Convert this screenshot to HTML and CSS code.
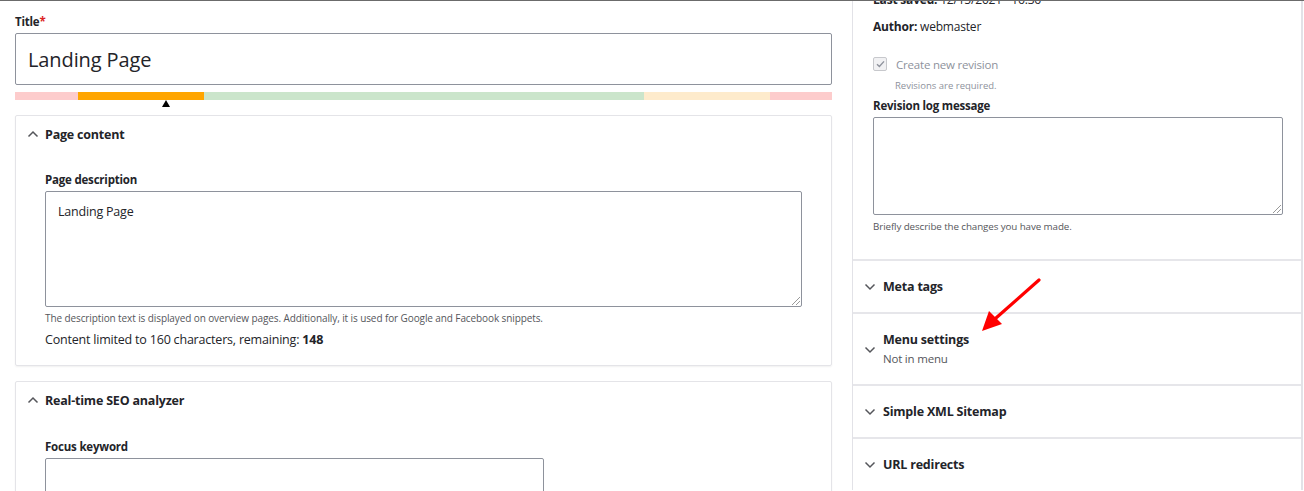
FILE: index.html
```html
<!DOCTYPE html>
<html lang="en">
<head>
<meta charset="utf-8">
<title>Edit Landing Page</title>
<link rel="stylesheet" href="styles.css">
</head>
<body>
<div class="viewport">
  <div class="layout">
    <main class="main">
      <label class="label title-label">Title<span class="req">*</span></label>
      <div class="title-input">Landing Page</div>
      <div class="score-bar">
        <span class="seg seg-pink" style="width:63px"></span>
        <span class="seg seg-orange" style="width:126px"></span>
        <span class="seg seg-green" style="width:440px"></span>
        <span class="seg seg-yellow" style="width:126px"></span>
        <span class="seg seg-pink" style="width:62px"></span>
        <span class="marker" style="left:147px"></span>
      </div>

      <section class="card">
        <div class="card-head">
          <svg class="chev" width="12" height="8" viewBox="0 0 12 8"><path d="M1.5 6.5 L6 2 L10.5 6.5" fill="none" stroke="#55565b" stroke-width="1.5"/></svg>
          <span>Page content</span>
        </div>
        <div class="card-body">
          <label class="label">Page description</label>
          <div class="textarea desc-area">Landing Page<span class="grip"></span></div>
          <div class="help">The description text is displayed on overview pages. Additionally, it is used for Google and Facebook snippets.</div>
          <div class="counter">Content limited to 160 characters, remaining: <b>148</b></div>
        </div>
      </section>

      <section class="card">
        <div class="card-head">
          <svg class="chev" width="12" height="8" viewBox="0 0 12 8"><path d="M1.5 6.5 L6 2 L10.5 6.5" fill="none" stroke="#55565b" stroke-width="1.5"/></svg>
          <span>Real-time SEO analyzer</span>
        </div>
        <div class="card-body seo-body">
          <label class="label">Focus keyword</label>
          <div class="keyword-input"></div>
        </div>
      </section>
    </main>

    <aside class="sidebar">
      <div class="meta">
        <div class="meta-line"><b>Last saved:</b> 12/15/2021 - 16:36</div>
        <div class="meta-line author"><b>Author:</b> webmaster</div>
        <div class="check-row">
          <span class="checkbox"><svg width="9" height="8" viewBox="0 0 9 8"><path d="M1 4.2 L3.4 6.4 L8 1.4" fill="none" stroke="#8e929c" stroke-width="1.4"/></svg></span>
          <span class="check-label">Create new revision</span>
        </div>
        <div class="check-help">Revisions are required.</div>
        <label class="label log-label">Revision log message</label>
        <div class="textarea log-area"><span class="grip"></span></div>
        <div class="help log-help">Briefly describe the changes you have made.</div>
      </div>
      <div class="acc">
        <svg class="chev" width="12" height="8" viewBox="0 0 12 8"><path d="M1.5 1.5 L6 6 L10.5 1.5" fill="none" stroke="#55565b" stroke-width="1.5"/></svg>
        <span class="acc-title">Meta tags</span>
      </div>
      <div class="acc acc-tall">
        <svg class="chev" width="12" height="8" viewBox="0 0 12 8"><path d="M1.5 1.5 L6 6 L10.5 1.5" fill="none" stroke="#55565b" stroke-width="1.5"/></svg>
        <div>
          <div class="acc-title">Menu settings</div>
          <div class="acc-sub">Not in menu</div>
        </div>
      </div>
      <div class="acc">
        <svg class="chev" width="12" height="8" viewBox="0 0 12 8"><path d="M1.5 1.5 L6 6 L10.5 1.5" fill="none" stroke="#55565b" stroke-width="1.5"/></svg>
        <span class="acc-title">Simple XML Sitemap</span>
      </div>
      <div class="acc">
        <svg class="chev" width="12" height="8" viewBox="0 0 12 8"><path d="M1.5 1.5 L6 6 L10.5 1.5" fill="none" stroke="#55565b" stroke-width="1.5"/></svg>
        <span class="acc-title">URL redirects</span>
      </div>
    </aside>
  </div>
  <svg class="annot" width="70" height="62" viewBox="0 0 70 62">
    <line x1="67" y1="8" x2="24" y2="46" stroke="#ff0000" stroke-width="3.2" stroke-linecap="round"/>
    <path d="M10 59 L17 39 L30 52 Z" fill="#ff0000"/>
  </svg>
</div>
</body>
</html>
```

FILE: styles.css
```css
* { box-sizing: border-box; }
html, body { margin: 0; padding: 0; background: #fff; }
body {
  font-family: "Open Sans", "Noto Sans", sans-serif;
  color: #232429;
  font-size: 12px;
}
.viewport {
  position: relative;
  width: 1304px;
  height: 491px;
  overflow: hidden;
  border-top: 1px solid #6b6b6b;
}
.layout {
  display: flex;
  gap: 20px;
  padding-left: 15px;
  align-items: flex-start;
}
.main {
  width: 817px;
  padding-top: 13px;
}
.label {
  display: block;
  font-weight: 700;
  font-size: 11.5px;
  line-height: 16px;
  letter-spacing: -0.2px;
  color: #232429;
}
.req { color: #dc2323; }
.title-input {
  margin-top: 3px;
  height: 52px;
  border: 1px solid #8e929c;
  border-radius: 2px;
  padding-left: 12px;
  font-size: 20px;
  line-height: 51px;
  letter-spacing: -0.1px;
  color: #232429;
}
.score-bar {
  position: relative;
  display: flex;
  margin-top: 7px;
  height: 8px;
}
.seg { display: block; height: 8px; }
.seg-pink { background: #fdcccc; }
.seg-orange { background: #ffa500; }
.seg-green { background: #cbe5cb; }
.seg-yellow { background: #feebcc; }
.marker {
  position: absolute;
  top: 8px;
  width: 0; height: 0;
  border-left: 4px solid transparent;
  border-right: 4px solid transparent;
  border-bottom: 7px solid #000;
}
.card {
  margin-top: 15px;
  border: 1px solid #e4e4e8;
  border-radius: 2px;
  box-shadow: 0 1px 2px rgba(0,0,0,0.06);
}
.card-head {
  display: flex;
  align-items: center;
  gap: 6px;
  padding: 0 0 0 11px;
  height: 37px;
  font-weight: 700;
  font-size: 12.5px;
  letter-spacing: -0.2px;
}
.card-head .chev { margin-top: -2px; }
.card-body {
  padding: 19px 29px 16px 29px;
}
.seo-body { padding-top: 20px; }
.textarea {
  position: relative;
  border: 1px solid #8e929c;
  border-radius: 2px;
  background: #fff;
}
.desc-area {
  margin-top: 3px;
  height: 116px;
  padding: 11px 12px;
  font-size: 12.5px;
  line-height: 18px;
  letter-spacing: -0.2px;
}
.grip {
  position: absolute;
  right: 1px; bottom: 1px;
  width: 8px; height: 8px;
  background: linear-gradient(135deg, transparent 45%, #999 45%, #999 52%, transparent 52%, transparent 70%, #999 70%, #999 77%, transparent 77%);
}
.help {
  font-size: 10px;
  line-height: 14px;
  color: #55565b;
  margin-top: 4px;
  letter-spacing: -0.1px;
}
.counter {
  margin-top: 6px;
  font-size: 12.5px;
  line-height: 18px;
  letter-spacing: -0.2px;
}
.counter b { font-weight: 700; }
.keyword-input {
  margin-top: 3px;
  width: 499px;
  height: 60px;
  border: 1px solid #8e929c;
  border-radius: 2px;
}
.sidebar {
  width: 451px;
  border-left: 1px solid #e2e2e7;
  border-right: 2px solid #e2e2e7;
  margin-top: -10px;
}
.meta {
  padding: 0 19px 25px 20px;
}
.meta-line {
  font-size: 12px;
  line-height: 18px;
  letter-spacing: -0.2px;
  color: #232429;
}
.meta-line b { font-weight: 700; }
.author { margin-top: 9px; }
.check-row {
  display: flex;
  align-items: center;
  gap: 9px;
  margin-top: 20px;
  height: 16px;
}
.checkbox {
  width: 14px; height: 14px;
  border: 1px solid #c7c8cc;
  border-radius: 2px;
  background: #f1f1f3;
  display: flex;
  align-items: center;
  justify-content: center;
}
.check-label {
  font-size: 11.5px;
  color: #8e929c;
  letter-spacing: -0.2px;
}
.check-help {
  margin-left: 22px;
  margin-top: 7px;
  font-size: 9.5px;
  line-height: 13px;
  color: #8e929c;
}
.log-label { margin-top: 6px; }
.log-area {
  margin-top: 3px;
  width: 410px;
  height: 98px;
}
.log-help { margin-top: 5px; font-size: 9.8px; }
.acc {
  display: flex;
  align-items: center;
  gap: 7px;
  height: 53px;
  padding-left: 11px;
  border-top: 2px solid #e6e6ea;
}
.acc-tall { height: 72px; }
.acc-tall .chev { margin-top: 2px; }
.acc-title {
  font-weight: 700;
  font-size: 12.5px;
  line-height: 18px;
  letter-spacing: -0.2px;
  color: #232429;
}
.acc-sub {
  font-size: 11.5px;
  line-height: 18px;
  color: #55565b;
  margin-top: 1px;
  letter-spacing: -0.2px;
}
.annot {
  position: absolute;
  left: 972px;
  top: 271px;
}
```
